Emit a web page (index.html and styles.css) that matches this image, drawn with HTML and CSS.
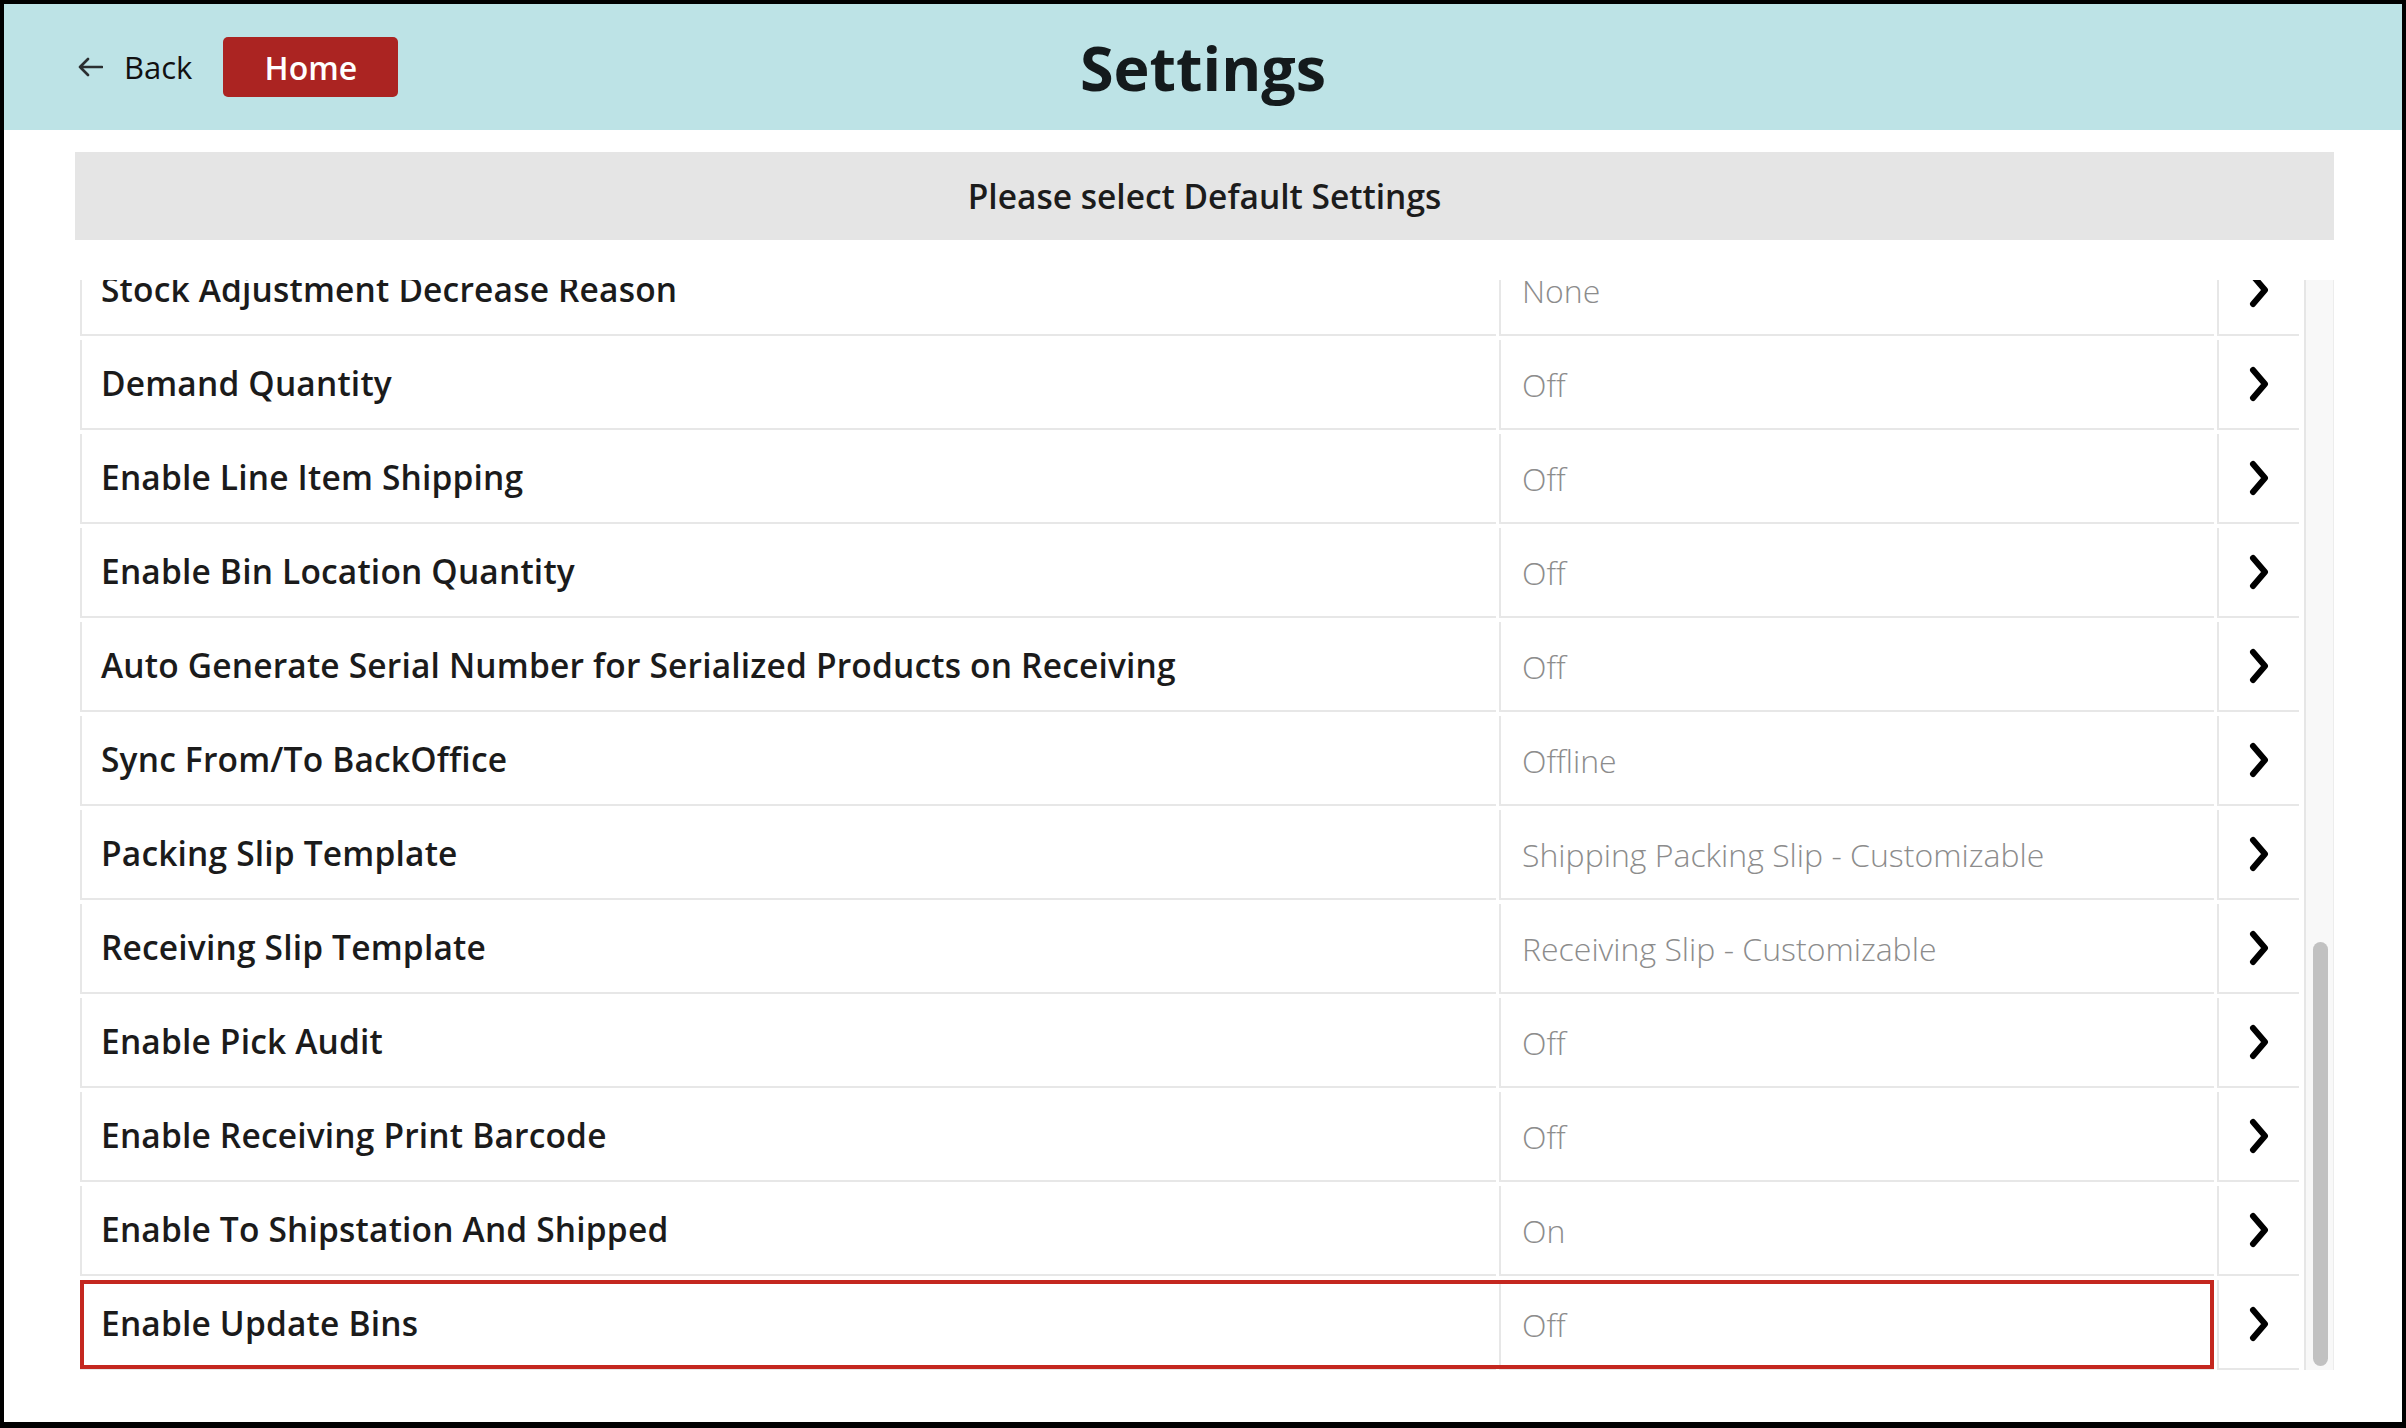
FILE: index.html
```html
<!DOCTYPE html>
<html lang="en">
<head>
<meta charset="utf-8">
<title>Settings</title>
<link rel="stylesheet" href="styles.css">
</head>
<body>
<div class="page">
  <header class="topbar">
    <div class="nav-left">
      <a class="back" href="#">
        <svg class="back-icon" width="26" height="24" viewBox="0 0 26 24" aria-hidden="true">
          <path d="M25 12H3M11 4L3 12L11 20" fill="none" stroke="#2b2f31" stroke-width="2.6" stroke-linecap="round" stroke-linejoin="round"/>
        </svg>
        <span>Back</span>
      </a>
      <button class="home" type="button">Home</button>
    </div>
    <h1 class="title">Settings</h1>
    <div class="nav-right"></div>
  </header>

  <main class="content">
    <div class="banner">Please select Default Settings</div>
    <div class="list-wrap">
      <div class="viewport">
        <div class="list">
          <div class="row"><div class="cell label">Stock Adjustment Decrease Reason</div><div class="cell value">None</div><div class="cell go"><svg width="22" height="36" viewBox="0 0 22 36"><path d="M5 4L17 18L5 32" fill="none" stroke="#000" stroke-width="6" stroke-linecap="round" stroke-linejoin="round"/></svg></div></div>
          <div class="row"><div class="cell label">Demand Quantity</div><div class="cell value">Off</div><div class="cell go"><svg width="22" height="36" viewBox="0 0 22 36"><path d="M5 4L17 18L5 32" fill="none" stroke="#000" stroke-width="6" stroke-linecap="round" stroke-linejoin="round"/></svg></div></div>
          <div class="row"><div class="cell label">Enable Line Item Shipping</div><div class="cell value">Off</div><div class="cell go"><svg width="22" height="36" viewBox="0 0 22 36"><path d="M5 4L17 18L5 32" fill="none" stroke="#000" stroke-width="6" stroke-linecap="round" stroke-linejoin="round"/></svg></div></div>
          <div class="row"><div class="cell label">Enable Bin Location Quantity</div><div class="cell value">Off</div><div class="cell go"><svg width="22" height="36" viewBox="0 0 22 36"><path d="M5 4L17 18L5 32" fill="none" stroke="#000" stroke-width="6" stroke-linecap="round" stroke-linejoin="round"/></svg></div></div>
          <div class="row"><div class="cell label">Auto Generate Serial Number for Serialized Products on Receiving</div><div class="cell value">Off</div><div class="cell go"><svg width="22" height="36" viewBox="0 0 22 36"><path d="M5 4L17 18L5 32" fill="none" stroke="#000" stroke-width="6" stroke-linecap="round" stroke-linejoin="round"/></svg></div></div>
          <div class="row"><div class="cell label">Sync From/To BackOffice</div><div class="cell value">Offline</div><div class="cell go"><svg width="22" height="36" viewBox="0 0 22 36"><path d="M5 4L17 18L5 32" fill="none" stroke="#000" stroke-width="6" stroke-linecap="round" stroke-linejoin="round"/></svg></div></div>
          <div class="row"><div class="cell label">Packing Slip Template</div><div class="cell value">Shipping Packing Slip - Customizable</div><div class="cell go"><svg width="22" height="36" viewBox="0 0 22 36"><path d="M5 4L17 18L5 32" fill="none" stroke="#000" stroke-width="6" stroke-linecap="round" stroke-linejoin="round"/></svg></div></div>
          <div class="row"><div class="cell label">Receiving Slip Template</div><div class="cell value">Receiving Slip - Customizable</div><div class="cell go"><svg width="22" height="36" viewBox="0 0 22 36"><path d="M5 4L17 18L5 32" fill="none" stroke="#000" stroke-width="6" stroke-linecap="round" stroke-linejoin="round"/></svg></div></div>
          <div class="row"><div class="cell label">Enable Pick Audit</div><div class="cell value">Off</div><div class="cell go"><svg width="22" height="36" viewBox="0 0 22 36"><path d="M5 4L17 18L5 32" fill="none" stroke="#000" stroke-width="6" stroke-linecap="round" stroke-linejoin="round"/></svg></div></div>
          <div class="row"><div class="cell label">Enable Receiving Print Barcode</div><div class="cell value">Off</div><div class="cell go"><svg width="22" height="36" viewBox="0 0 22 36"><path d="M5 4L17 18L5 32" fill="none" stroke="#000" stroke-width="6" stroke-linecap="round" stroke-linejoin="round"/></svg></div></div>
          <div class="row"><div class="cell label">Enable To Shipstation And Shipped</div><div class="cell value">On</div><div class="cell go"><svg width="22" height="36" viewBox="0 0 22 36"><path d="M5 4L17 18L5 32" fill="none" stroke="#000" stroke-width="6" stroke-linecap="round" stroke-linejoin="round"/></svg></div></div>
          <div class="row selected"><div class="cell label">Enable Update Bins</div><div class="cell value">Off</div><div class="cell go"><svg width="22" height="36" viewBox="0 0 22 36"><path d="M5 4L17 18L5 32" fill="none" stroke="#000" stroke-width="6" stroke-linecap="round" stroke-linejoin="round"/></svg></div></div>
        </div>
      </div>
      <div class="track"><div class="thumb"></div></div>
    </div>
  </main>
</div>
</body>
</html>
```

FILE: styles.css
```css
html, body {
  margin: 0;
  padding: 0;
  background: #000;
}

.page {
  width: 2406px;
  height: 1428px;
  box-sizing: border-box;
  border: 4px solid #000;
  border-bottom-width: 6px;
  background: #fff;
  overflow: hidden;
  font-family: "Open Sans", "Liberation Sans", sans-serif;
}

.topbar {
  height: 126px;
  background: #bde3e6;
  display: grid;
  grid-template-columns: 1fr auto 1fr;
  align-items: center;
}

.nav-left {
  display: flex;
  align-items: center;
  padding-left: 73px;
}

.back {
  display: flex;
  align-items: center;
  gap: 21px;
  font-size: 31px;
  font-weight: 400;
  color: #111;
  text-decoration: none;
}

.back-icon {
  display: block;
}

.home {
  margin-left: 31px;
  width: 175px;
  height: 60px;
  background: #ab2422;
  color: #fff;
  border: 0;
  border-radius: 5px;
  font-family: "Open Sans", "Liberation Sans", sans-serif;
  font-size: 32px;
  font-weight: 600;
  padding: 0;
}

.title {
  margin: 0;
  font-size: 61px;
  font-weight: 700;
  color: #141a1c;
  line-height: 1;
}

.content {
  padding: 22px 68px 0 71px;
}

.banner {
  height: 88px;
  background: #e5e5e5;
  display: flex;
  align-items: center;
  justify-content: center;
  font-size: 33.5px;
  font-weight: 600;
  color: #1c1c1c;
}

.list-wrap {
  display: flex;
  margin-top: 40px;
  padding-left: 5px;
  height: 1092px;
}

.viewport {
  width: 2219px;
  overflow: hidden;
}

.list {
  display: flex;
  flex-direction: column;
  gap: 4px;
  margin-top: -34px;
}

.row {
  display: grid;
  grid-template-columns: 1416px 715px 82px;
  column-gap: 3px;
}

.row.selected {
  position: relative;
}

.row.selected::after {
  content: "";
  position: absolute;
  left: 0;
  top: 0;
  width: 2134px;
  height: 89px;
  box-sizing: border-box;
  border: 4px solid #c4271f;
}

.cell {
  height: 90px;
  box-sizing: border-box;
  border-left: 2px solid #e7e7e7;
  border-bottom: 2px solid #e7e7e7;
  display: flex;
  align-items: center;
  white-space: nowrap;
}

.label {
  padding-left: 19px;
  padding-bottom: 2px;
  font-size: 33.5px;
  letter-spacing: 0.18px;
  font-weight: 600;
  color: #1b1b1b;
}

.value {
  padding-left: 21px;
  font-size: 32px;
  font-weight: 300;
  color: #8c8c8c;
}

.go {
  justify-content: center;
}

.go svg {
  display: block;
}

.track {
  margin-left: 5px;
  width: 30px;
  height: 1090px;
  box-sizing: border-box;
  border-left: 2px solid #e6e6e6;
  border-right: 1px solid #ececec;
  background: #f8f8f8;
  padding-left: 7px;
}

.thumb {
  margin-top: 662px;
  width: 15px;
  height: 424px;
  border-radius: 8px;
  background: #c1c1c1;
}
```
